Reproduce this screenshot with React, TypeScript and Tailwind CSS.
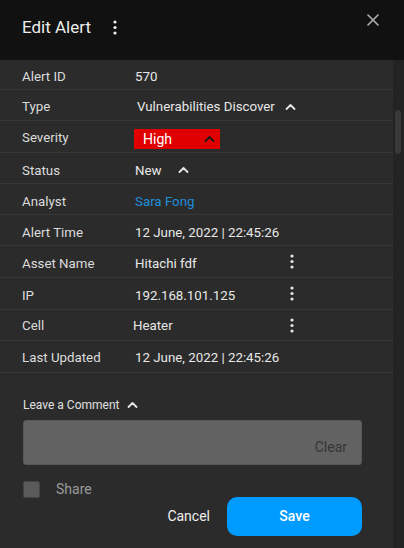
import React from "react";

const font = { fontFamily: "Roboto, 'Noto Sans', sans-serif" };

function ChevronUp({ color = "#e6e6e6" }: { color?: string }) {
  return (
    <svg width="11" height="7" viewBox="0 0 11 7" fill="none">
      <polyline points="1.5,6 5.5,2 9.5,6" stroke={color} strokeWidth="1.8" strokeLinecap="round" strokeLinejoin="round" />
    </svg>
  );
}

function Kebab({ color = "#e6e6e6" }: { color?: string }) {
  return (
    <svg width="4" height="15" viewBox="0 0 4 15">
      <circle cx="2" cy="2" r="1.6" fill={color} />
      <circle cx="2" cy="7.5" r="1.6" fill={color} />
      <circle cx="2" cy="13" r="1.6" fill={color} />
    </svg>
  );
}

function Row({ label, children, h = "h-[31px]", pt = "pt-[5px]" }: { label: string; children: React.ReactNode; h?: string; pt?: string }) {
  return (
    <div className={`flex items-center ${h} ${pt} border-b border-[#373737] pl-[22px]`}>
      <div className="w-[113px] text-[13.3px] text-[#dcdcdc]">{label}</div>
      <div className="flex items-center text-[13.3px] text-[#e8e8e8]">{children}</div>
    </div>
  );
}

export default function App() {
  return (
    <div className="w-[404px] h-[548px] bg-[#2b2b2b] flex flex-col overflow-hidden" style={font}>
      <div className="h-[60px] bg-[#111111] flex items-start relative shrink-0">
        <div className="pl-[22px] pt-[15px] text-[17px] text-[#ececec] leading-[24px]">Edit Alert</div>
        <div className="ml-[22px] mt-[20px]">
          <Kebab color="#f0f0f0" />
        </div>
        <div className="absolute right-[25px] top-[14px]">
          <svg width="12" height="12" viewBox="0 0 12 12">
            <path d="M1 1L11 11M11 1L1 11" stroke="#b0b0b0" strokeWidth="1.6" strokeLinecap="round" />
          </svg>
        </div>
      </div>
      <div className="flex flex-1 min-h-0">
        <div className="flex-1 flex flex-col">
          <Row label="Alert ID" h="h-[30px]" pt="pt-[4px]">570</Row>
          <Row label="Type" pt="pt-[4px]">
            <span className="ml-[2px]">Vulnerabilities Discover</span>
            <span className="ml-[10px] mb-[2px]"><ChevronUp /></span>
          </Row>
          <Row label="Severity" h="h-[32px]" pt="pt-[2px]">
            <div className="flex items-center bg-[#e10000] w-[86px] h-[20px] pl-[9px] -ml-[1px] mt-[3px]">
              <span className="text-[14px] text-white">High</span>
              <span className="ml-[32px] mb-[2px]"><ChevronUp color="#1a1a1a" /></span>
            </div>
          </Row>
          <Row label="Status" pt="pt-[6px]">
            <span>New</span>
            <span className="ml-[16px] mb-[4px]"><ChevronUp /></span>
          </Row>
          <Row label="Analyst" pt="pt-[6px]">
            <span className="text-[#1f8fdb]">Sara Fong</span>
          </Row>
          <Row label="Alert Time" pt="pt-[6px]">
            <span>12 June, 2022 | 22:45:26</span>
          </Row>
          <Row label="Asset Name" h="h-[32px]" pt="pt-[5px]">
            <span className="w-[155px]">Hitachi fdf</span>
            <span className="-mt-[5px]"><Kebab /></span>
          </Row>
          <Row label="IP" h="h-[32px]" pt="pt-[4px]">
            <span className="w-[155px]">192.168.101.125</span>
            <span className="-mt-[4px]"><Kebab /></span>
          </Row>
          <Row label="Cell" pt="pt-[1px]">
            <span className="w-[157px] -ml-[2px]">Heater</span>
            <Kebab />
          </Row>
          <Row label="Last Updated" h="h-[32px]" pt="pt-[2px]">
            <span>12 June, 2022 | 22:45:26</span>
          </Row>

          <div className="pl-[23px] pt-[24px]">
            <div className="flex items-center text-[12px] text-[#e0e0e0] leading-[16px]">
              <span>Leave a Comment</span>
              <span className="ml-[8px] mb-[2px]"><ChevronUp /></span>
            </div>
            <div className="mt-[7px] w-[339px] h-[45px] bg-[#626262] border border-[#575757] rounded-[3px] flex items-end justify-end pr-[14px] pb-[9px]">
              <span className="text-[14px] text-[#363636] leading-[16px]">Clear</span>
            </div>
            <div className="flex items-center mt-[14px]">
              <div className="w-[17px] h-[17px] bg-[#5a5a5a] border border-[#444] rounded-[2px]"></div>
              <span className="ml-[16px] text-[14px] text-[#9a9a9a]">Share</span>
            </div>
            <div className="flex items-center justify-end w-[339px] -mt-[3px]">
              <span className="text-[14px] text-[#f0f0f0] mr-[17px]">Cancel</span>
              <button className="w-[135px] h-[39px] bg-[#009bfe] rounded-[10px] text-[14px] text-white font-medium">Save</button>
            </div>
          </div>
        </div>
        <div className="w-[11px] bg-[#232323] shrink-0 relative">
          <div className="absolute left-[2px] top-[50px] w-[6px] h-[44px] rounded-[3px] bg-[#393939]"></div>
        </div>
      </div>
    </div>
  );
}
